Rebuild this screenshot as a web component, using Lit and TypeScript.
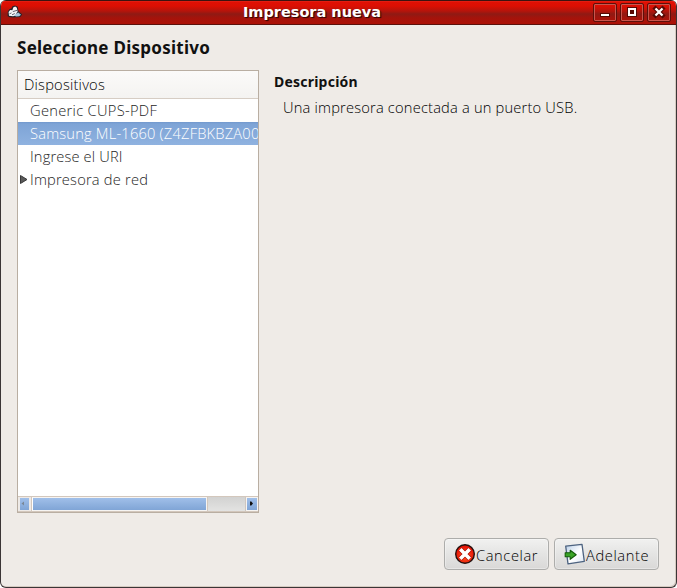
import { LitElement, html, css, svg } from "lit";
import { customElement, property, state } from "lit/decorators.js";
import { classMap } from "lit/directives/class-map.js";

const devices = [
  { name: "Generic CUPS-PDF", cls: "generic", parent: false },
  { name: "Samsung ML-1660 (Z4ZFBKBZA00", cls: "samsung", parent: false },
  { name: "Ingrese el URI", cls: "uri", parent: false },
  { name: "Impresora de red", cls: "red", parent: true },
];

@customElement("title-bar")
export class TitleBar extends LitElement {
  @property() heading = "";

  static styles = css`
    :host {
      display: flex;
      align-items: center;
      box-sizing: border-box;
      height: 25px;
      padding: 0 5px 0 6px;
      border-top: 1px solid #3d1310;
      border-bottom: 1px solid #5c100b;
      background: linear-gradient(#e8281b 0, #e01004 1px, #dc0f03 5px, #b5140b 10px, #8f1a14 13px, #a5130b 17px, #ad1107 23px);
    }
    .hat { width: 16px; height: 16px; flex: none; margin-top: -1px; }
    .heading {
      flex: 1;
      padding: 0 0 2px 8px;
      text-align: center;
      white-space: nowrap;
      color: #fff;
      font: bold 14.5px/20px "DejaVu Sans", sans-serif;
      text-shadow: 1px 1px 1px #3a0603, 1px 1px 0 #5a0a05;
    }
    .controls { display: flex; gap: 3px; }
    .control {
      box-sizing: border-box;
      width: 24px;
      height: 19px;
      border: 1px solid #5e0f0a;
      border-radius: 2px;
      box-shadow: inset 0 0 0 1px #c9564d;
    }
    .control svg { display: block; width: 22px; height: 17px; }
  `;

  render() {
    return html`
      <svg class="hat" viewBox="0 0 16 16">
        <path d="M.6 12 .8 7.500 2.600 5 4.300 4.500 5.400 2.300 8 1.500 10.800 2.800 11.500 7.300 15.200 10.500 13.300 13 9 13.200 6 13.400 2 13Z" fill="#26222a"/>
        <path d="M1.600 8 3.200 5.900 5.400 6.200 6.200 3.400 8.200 2.500 9.900 3.800 10.600 7.800 9.500 9 9 11.500 6 12.300 2 11.800Z" fill="#f4f4f6"/>
        <path d="M7 11.200 11.200 8.600 14 10.800 12.200 12.200 9 12.500Z" fill="#a9c6dc"/>
        <path d="M5.800 7.600 10.200 6.300M2.500 9.800 4.500 8.900M5 10.800 7.800 9.500" stroke="#66636e" stroke-width="1"/>
      </svg>
      <div class="heading">${this.heading}</div>
      <div class="controls">
        <div class="control"><svg viewBox="0 0 22 17"><path d="M6 9h10v4H6z" fill="#570904"/><path d="M7 10h8v2H7z" fill="#fff"/></svg></div>
        <div class="control"><svg viewBox="0 0 22 17"><path d="M6 3h10v10H6z" fill="#570904"/><path d="M7 4h8v8H7zM9 6v4h4V6z" fill="#fff" fill-rule="evenodd"/></svg></div>
        <div class="control"><svg viewBox="0 0 22 17"><path d="M7.500 4.500l7 7M14.500 4.500l-7 7" stroke="#570904" stroke-width="4.400" stroke-linecap="square"/><path d="M8.300 5.300l5.400 5.400M13.700 5.300l-5.400 5.400" stroke="#fff" stroke-width="2.300" stroke-linecap="square"/></svg></div>
      </div>`;
  }
}

@customElement("device-list")
export class DeviceList extends LitElement {
  @state() private selected = 1;

  static styles = css`
    :host {
      display: flex;
      flex-direction: column;
      box-sizing: border-box;
      width: 242px;
      height: 443px;
      border: 1px solid #b9aea2;
      background: #fff;
      color: #1e1e1e;
      font: 300 14.67px/23px "Open Sans", "Noto Sans", sans-serif;
    }
    .head {
      box-sizing: border-box;
      height: 28px;
      padding: 2px 6px 0;
      line-height: 22px;
      border-bottom: 1px solid #d6cdc4;
      background: linear-gradient(#fbfaf9, #f4f3f1);
      color: #000;
      letter-spacing: 0.22px;
    }
    .rows { flex: 1; }
    .row {
      display: flex;
      align-items: center;
      height: 23px;
      overflow: hidden;
      white-space: nowrap;
    }
    .selected {
      background: linear-gradient(#7299cd, #7ea4d6 2px, #8fb2e0);
      color: #fff;
    }
    .marker { width: 12px; height: 23px; flex: none; }
    .generic { letter-spacing: 0.3px; }
    .samsung { letter-spacing: 0.2px; }
    .uri { letter-spacing: 0.15px; }
    .red { letter-spacing: 0.2px; }
    .scroll {
      display: flex;
      box-sizing: border-box;
      height: 16px;
      border-top: 1px solid #d3c7bc;
      border-bottom: 1px solid #d3c7bc;
      background: linear-gradient(#d2d2d1, #e3e3e2);
    }
    .step, .thumb {
      box-sizing: border-box;
      border: 1px solid #f6f4f2;
      background: linear-gradient(#a0bfe9, #80a5d6);
    }
    .step { width: 12px; flex: none; }
    .step svg { display: block; width: 10px; height: 12px; }
    .off { border-width: 1px 2px; border-color: #eeeae7; width: 13px; }
    .thumb { width: 175px; border-left: 1px solid #fff; margin-left: 1px; outline: 1px solid #d3c7bc; outline-offset: 0; clip-path: inset(0 -1px); }
    .track { flex: 1; border-right: 1px solid #cfc6bf; }
  `;

  render() {
    return html`
      <div class="head">Dispositivos</div>
      <div class="rows">
        ${devices.map(
          (d, i) => html`<div class=${classMap({ row: true, selected: i === this.selected })} @click=${() => (this.selected = i)}>
            <svg class="marker" viewBox="0 0 12 23">
              ${d.parent ? svg`<path d="M2.500 7.500v8l6.500-4z" fill="#5a5a5a" stroke="#383838"/>` : null}
            </svg>
            <span class=${d.cls}>${d.name}</span>
          </div>`
        )}
      </div>
      <div class="scroll">
        <div class="step off"><svg viewBox="0 0 10 12"><path d="M1.500 5.500 4 3.500v4z" fill="#7a8797"/></svg></div>
        <div class="thumb"></div>
        <div class="track"></div>
        <div class="step"><svg viewBox="0 0 10 12"><path d="M3 3.500h1.300L6 5.500 4.300 7.500H3z" fill="#111"/></svg></div>
      </div>`;
  }
}

@customElement("app-root")
export class AppRoot extends LitElement {
  static styles = css`
    :host {
      display: block;
      width: 677px;
      height: 588px;
      background: #fff;
    }
    .window {
      display: flex;
      flex-direction: column;
      box-sizing: border-box;
      height: 588px;
      border: 1px solid #3b3536;
      border-top: 0;
      border-radius: 6px;
      overflow: hidden;
      background: #efebe7;
      box-shadow: inset -1px -1px 0 #d5cac1;
      color: #000;
      font: 300 14.67px/22px "Open Sans", "Noto Sans", sans-serif;
    }
    .body { flex: 1; display: flex; flex-direction: column; padding: 11px 17px 17px 16px; }
    h1 {
      margin: 0 0 11px;
      font: bold 17px/23px "Noto Sans", sans-serif;
      letter-spacing: 0.26px;
      color: #111;
    }
    .panes { display: flex; gap: 15px; }
    h2 { margin: 1px 0 3px; font: bold 14px/22px "Noto Sans", sans-serif; letter-spacing: 0.22px; color: #111; }
    p { margin: 0 0 0 9px; letter-spacing: 0.19px; }
    .actions { display: flex; justify-content: flex-end; gap: 5px; margin-top: auto; }
    button {
      display: flex;
      align-items: center;
      box-sizing: border-box;
      width: 105px;
      height: 32px;
      padding: 0 0 0 9px;
      border: 1px solid #adadab;
      border-radius: 4px;
      background: linear-gradient(#f1f1f0, #e4e4e3 50%, #d9d8d7);
      box-shadow: inset 0 0 0 1px #ffffff55;
      color: #000;
      font: inherit;
      letter-spacing: 0.6px;
      white-space: nowrap;
    }
    button svg { width: 22px; height: 22px; flex: none; }
    button span { padding-top: 1px; }
  `;

  render() {
    return html`
      <div class="window">
        <title-bar heading="Impresora nueva"></title-bar>
        <div class="body">
          <h1>Seleccione Dispositivo</h1>
          <div class="panes">
            <device-list></device-list>
            <div>
              <h2>Descripción</h2>
              <p>Una impresora conectada a un puerto USB.</p>
            </div>
          </div>
          <div class="actions">
            <button>
              <svg viewBox="0 0 22 22">
                <defs><radialGradient id="r" cx=".5" cy=".6" r=".55"><stop offset="0" stop-color="#ff5a20"/><stop offset="1" stop-color="#e60f05"/></radialGradient></defs>
                <circle cx="11" cy="11" r="9.300" fill="url(#r)" stroke="#23110f" stroke-width="1.400"/>
                <path d="M6.200 6.200l9.600 9.600M15.800 6.200l-9.600 9.600" stroke="#a00" stroke-width="4.800" stroke-linecap="butt"/>
                <path d="M6.300 6.300l9.400 9.400M15.700 6.300l-9.400 9.400" stroke="#fff" stroke-width="3.700" stroke-linecap="butt"/>
              </svg>
              <span>Cancelar</span>
            </button>
            <button>
              <svg viewBox="0 0 22 22">
                <defs><linearGradient id="p" x2="1" y2="1"><stop offset="0" stop-color="#b9cfe8"/><stop offset=".55" stop-color="#fff"/><stop offset="1" stop-color="#dce6f2"/></linearGradient></defs>
                <path d="M1.700 3.200 18 1.300 20.300 18.400 4 20.800Z" fill="url(#p)" stroke="#4d6380" stroke-width="1.300" stroke-linejoin="round"/>
                <path d="M1.200 9.800h5V7.200l6 4.500-6 4.600v-2.500h-5z" fill="#3aa526" stroke="#145c0a" stroke-width="1.100" stroke-linejoin="round"/>
              </svg>
              <span>Adelante</span>
            </button>
          </div>
        </div>
      </div>`;
  }
}
